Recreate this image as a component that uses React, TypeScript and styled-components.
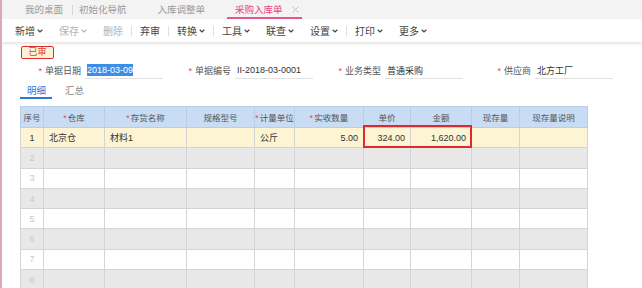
import styled, { createGlobalStyle } from "styled-components"

const GlobalStyle = createGlobalStyle`
    html, body {
        margin: 0;
        padding: 0;
        background: #fff;
    }
    body {
        font-family: "Liberation Sans", "Noto Sans CJK SC", sans-serif;
    }
`

type ToolItem = { label: string; menu?: boolean; disabled?: boolean; sepBefore?: boolean }

const toolItems: ToolItem[] = [
    { label: "新增", menu: true },
    { label: "保存", menu: true, disabled: true },
    { label: "删除", disabled: true },
    { label: "弃审", sepBefore: true },
    { label: "转换", menu: true, sepBefore: true },
    { label: "工具", menu: true, sepBefore: true },
    { label: "联查", menu: true },
    { label: "设置", menu: true },
    { label: "打印", menu: true, sepBefore: true },
    { label: "更多", menu: true },
]

const columns = [
    { title: "序号", width: 23 },
    { title: "仓库", width: 61, required: true },
    { title: "存货名称", width: 82, required: true },
    { title: "规格型号", width: 68 },
    { title: "计量单位", width: 40, required: true },
    { title: "实收数量", width: 69, required: true },
    { title: "单价", width: 47 },
    { title: "金额", width: 61 },
    { title: "现存量", width: 48 },
    { title: "现存量说明", width: 68 },
]

const fields = [
    { label: "单据日期", value: "2018-03-09", selected: true },
    { label: "单据编号", value: "II-2018-03-0001" },
    { label: "业务类型", value: "普通采购" },
    { label: "供应商", value: "北方工厂" },
]

function Chevron() {
    return (
        <svg width="6" height="4" viewBox="0 0 6 4">
            <path d="M0.7 0.8 L3 3 L5.3 0.8" fill="none" stroke="currentColor" strokeWidth="1.2" />
        </svg>
    )
}

export default function App() {
    const emptyRows = [2, 3, 4, 5, 6, 7, 8]

    return (
        <Page>
            <GlobalStyle />
            <TabBar>
                <Tab $ml={17}>我的桌面</Tab>
                <TabSep />
                <Tab $ml={0}>初始化导航</Tab>
                <Tab $ml={19}>入库调整单</Tab>
                <Tab $ml={16} $active>
                    采购入库单
                    <CloseMark width="7" height="7" viewBox="0 0 7 7">
                        <path d="M0.5 0.5 L6.5 6.5 M6.5 0.5 L0.5 6.5" stroke="currentColor" strokeWidth="1" />
                    </CloseMark>
                </Tab>
            </TabBar>

            <Toolbar>
                {toolItems.map((item) => (
                    <ToolGroup key={item.label}>
                        {item.sepBefore && <ToolSep />}
                        <ToolButton $disabled={item.disabled}>
                            {item.label}
                            {item.menu && <Chevron />}
                        </ToolButton>
                    </ToolGroup>
                ))}
            </Toolbar>

            <Content>
                <StatusBadge>已审</StatusBadge>

                <FormRow>
                    {fields.map((f) => (
                        <Field key={f.label}>
                            <FieldLabel>
                                <Star>*</Star>
                                {f.label}
                            </FieldLabel>
                            <FieldValue>
                                {f.selected ? <Selected>{f.value}</Selected> : f.value}
                            </FieldValue>
                        </Field>
                    ))}
                </FormRow>

                <SubTabs>
                    <SubTab $active>明细</SubTab>
                    <SubTab>汇总</SubTab>
                </SubTabs>

                <TableWrap>
                    <Grid>
                        <colgroup>
                            {columns.map((c) => (
                                <col key={c.title} style={{ width: c.width }} />
                            ))}
                        </colgroup>
                        <thead>
                            <tr>
                                {columns.map((c) => (
                                    <Th key={c.title}>
                                        {c.required && <HeadStar>*</HeadStar>}
                                        {c.title}
                                    </Th>
                                ))}
                            </tr>
                        </thead>
                        <tbody>
                            <Row $kind="current">
                                <Td $align="center">1</Td>
                                <Td>北京仓</Td>
                                <Td>材料1</Td>
                                <Td></Td>
                                <Td>公斤</Td>
                                <Td $align="right">5.00</Td>
                                <Td $align="right">324.00</Td>
                                <Td $align="right">1,620.00</Td>
                                <Td></Td>
                                <Td></Td>
                            </Row>
                            {emptyRows.map((n) => (
                                <Row key={n} $kind={n % 2 === 0 ? "grey" : "white"}>
                                    <Td $align="center" $faint>{n}</Td>
                                    {columns.slice(1).map((c) => (
                                        <Td key={c.title}></Td>
                                    ))}
                                </Row>
                            ))}
                        </tbody>
                    </Grid>
                    <Highlight />
                </TableWrap>
            </Content>
        </Page>
    )
}

const Page = styled.div`
    width: 640px;
    height: 288px;
    overflow: hidden;
    border-left: 2px solid #dca6bd;
    background: #fff;
`

const TabBar = styled.div`
    display: flex;
    align-items: stretch;
    height: 19px;
    background: #f3f3f3;
    font-size: 9.5px;
`

const Tab = styled.div<{ $ml: number; $active?: boolean }>`
    display: flex;
    align-items: center;
    margin-left: ${(p) => p.$ml}px;
    padding: 1px ${(p) => (p.$active ? "3px 0 8px" : "6px 0")};
    color: ${(p) => (p.$active ? "#e8457f" : "#9a9a9a")};
    border-bottom: 2px solid ${(p) => (p.$active ? "#e8558b" : "transparent")};
    box-sizing: border-box;
`

const TabSep = styled.div`
    width: 1px;
    height: 10px;
    align-self: center;
    margin-left: 3px;
    background: #d6d6d6;
`

const CloseMark = styled.svg`
    margin-left: 9px;
    color: #c2c2c2;
`

const Toolbar = styled.div`
    display: flex;
    align-items: center;
    height: 23px;
    padding-left: 5px;
    background: #fff;
    box-shadow: 0 2px 3px rgba(0, 0, 0, 0.1);
    position: relative;
    font-size: 10px;
`

const ToolGroup = styled.div`
    display: flex;
    align-items: center;
`

const ToolButton = styled.div<{ $disabled?: boolean }>`
    display: flex;
    align-items: center;
    gap: 2px;
    padding: 0 8px;
    color: ${(p) => (p.$disabled ? "#b4b4b4" : "#444")};
`

const ToolSep = styled.div`
    width: 1px;
    height: 10px;
    background: #e0e0e0;
`

const Content = styled.div`
    padding: 4px 0 0 18px;
`

const StatusBadge = styled.div`
    width: 33px;
    height: 13px;
    margin-left: 1px;
    box-sizing: border-box;
    border: 1.5px solid #dc2f2f;
    border-radius: 2px;
    background: #fcf2d6;
    color: #e03a3a;
    font-size: 9px;
    line-height: 10px;
    text-align: center;
`

const FormRow = styled.div`
    display: grid;
    grid-template-columns: repeat(4, 150px);
    margin-top: 3px;
    margin-left: 20px;
    height: 17px;
    font-size: 9px;
`

const Field = styled.div`
    display: flex;
    align-items: stretch;
`

const FieldLabel = styled.div`
    width: 45px;
    padding-right: 4px;
    box-sizing: border-box;
    display: flex;
    align-items: center;
    justify-content: flex-end;
    white-space: nowrap;
    color: #555;
`

const Star = styled.span`
    color: #e04848;
    margin-right: 3px;
`

const HeadStar = styled.span`
    color: #e04848;
    margin-right: 1px;
`

const FieldValue = styled.div`
    width: 78px;
    display: flex;
    align-items: center;
    padding-left: 2px;
    box-sizing: border-box;
    border-bottom: 1px solid #e2e2e2;
    color: #333;
    white-space: nowrap;
`

const Selected = styled.span`
    background: #3f8ee6;
    color: #fff;
    padding: 1px 0;
`

const SubTabs = styled.div`
    display: flex;
    margin-top: 4px;
    font-size: 9.5px;
`

const SubTab = styled.div<{ $active?: boolean }>`
    width: 32px;
    height: 16px;
    box-sizing: border-box;
    padding-left: 7px;
    margin-right: 6px;
    color: ${(p) => (p.$active ? "#2f78d8" : "#888")};
    border-bottom: 2px solid ${(p) => (p.$active ? "#2f78d8" : "transparent")};
`

const TableWrap = styled.div`
    position: relative;
    width: 567px;
    margin-top: 7px;
`

const Grid = styled.table`
    width: 567px;
    table-layout: fixed;
    border-collapse: collapse;
    font-size: 9px;
`

const Th = styled.th`
    height: 20px;
    padding: 0;
    background: #c8dcf3;
    border: 1px solid #b9cde4;
    color: #555;
    font-size: 8.5px;
    font-weight: normal;
    text-align: center;
    white-space: nowrap;
    overflow: hidden;
`

const rowBg = { current: "#fcf4d2", grey: "#e8e8e8", white: "#fff" }

const Row = styled.tr<{ $kind: "current" | "grey" | "white" }>`
    height: 20.3px;
    background: ${(p) => rowBg[p.$kind]};
`

const Td = styled.td<{ $align?: string; $faint?: boolean }>`
    padding: 0 5px;
    border: 1px solid #d4d4d4;
    color: ${(p) => (p.$faint ? "#c8c8c8" : "#333")};
    text-align: ${(p) => p.$align || "left"};
    white-space: nowrap;
    overflow: hidden;
`

const Highlight = styled.div`
    position: absolute;
    left: 343px;
    top: 19px;
    width: 109px;
    height: 23px;
    box-sizing: border-box;
    border: 2px solid #e0282f;
    pointer-events: none;
`
